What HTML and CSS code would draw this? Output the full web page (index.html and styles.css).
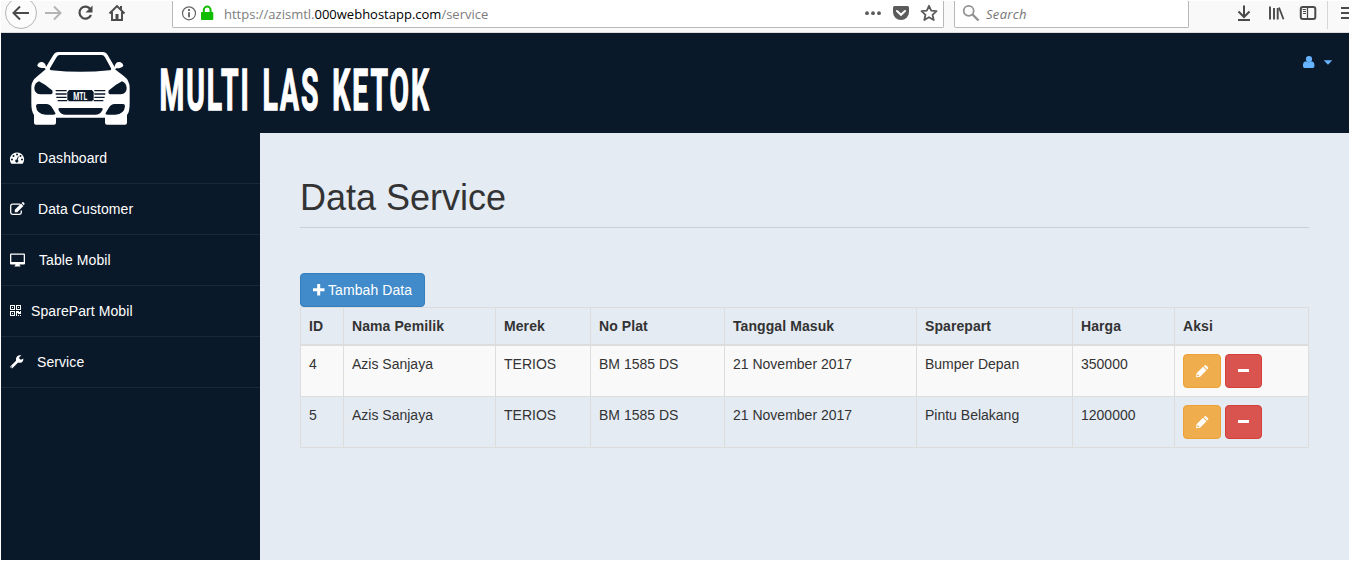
FILE: index.html
```html
<!DOCTYPE html>
<html lang="id">
<head>
<meta charset="utf-8">
<title>Data Service</title>
<link rel="stylesheet" href="styles.css">
</head>
<body>
<div class="window">
  <div class="toolbar">
    <svg class="nav-icons" width="171" height="31" viewBox="1 1 171 31" fill="none" stroke="#4a4a4a" stroke-width="2">
      <circle cx="21" cy="13" r="15.5" fill="#fcfcfc" stroke="#b5b5b5" stroke-width="1"/>
      <path d="M29 13H14M20 6.5 13.5 13 20 19.500"/>
      <path d="M45 13h15M54 6.500 60.500 13 54 19.500" stroke="#b4b4b4"/>
      <path d="M90.500 9.300A6 6 0 1 0 91 15" stroke-width="2.200"/>
      <path d="M92.500 5.500v7h-7z" fill="#4a4a4a" stroke="none"/>
      <path d="M109.500 13.500 117 6l7.500 7.500M112 12v8h10v-8" stroke-width="1.900"/>
      <path d="M115.500 14h3v6h-3z" fill="#4a4a4a" stroke="none"/>
      <path d="M120 6h2v4l-2-2z" fill="#4a4a4a" stroke="none"/>
    </svg>
    <div class="address">
      <svg width="46" height="26" viewBox="173 1 46 26" fill="none">
        <circle cx="189" cy="13.300" r="6.500" stroke="#666" stroke-width="1.200"/>
        <path d="M189 9v2M189 12.300v5" stroke="#555" stroke-width="1.700"/>
        <path d="M203.800 12.500V10a3.400 3.400 0 0 1 6.800 0v2.500" stroke="#12bc00" stroke-width="2"/>
        <rect x="201" y="12" width="12.300" height="8" rx="1" fill="#12bc00"/>
      </svg>
      <span class="url">https://azismtl.<b>000webhostapp.com</b>/service</span>
      <svg class="address-actions" width="80" height="26" viewBox="863 1 80 26" fill="#5b5b5b">
        <circle cx="867" cy="13.200" r="1.900"/><circle cx="873" cy="13.200" r="1.900"/><circle cx="879" cy="13.200" r="1.900"/>
        <path d="M894.500 6h13a1.500 1.500 0 0 1 1.500 1.500v4.500a8 8 0 0 1-16 0V7.500A1.500 1.500 0 0 1 894.500 6z"/>
        <path d="m897 11 4 3.800 4-3.800" fill="none" stroke="#fff" stroke-width="2" stroke-linecap="round"/>
        <path d="m929 5.800 2.200 4.900 5.300.5-4 3.600 1.200 5.200-4.700-2.800-4.700 2.800 1.200-5.200-4-3.600 5.300-.5z" fill="none" stroke="#5b5b5b" stroke-width="1.800" stroke-linejoin="round"/>
      </svg>
    </div>
    <div class="search">
      <svg width="30" height="26" viewBox="955 1 30 26" fill="none" stroke="#929292">
        <circle cx="968.700" cy="10.800" r="5" stroke-width="1.800"/><path d="m972.500 14.500 6 6" stroke-width="2.400"/>
      </svg>
      <span>Search</span>
    </div>
    <svg class="tool-icons" width="161" height="31" viewBox="1189 1 161 31" fill="none" stroke="#4a4a4a" stroke-width="2">
      <path d="M1244 5.500v11M1238.500 11.500l5.500 5.500 5.500-5.500M1238 20h12"/>
      <path d="M1270 6.500v13M1274 8v11.500M1277.700 8v11.500" stroke-width="1.900"/><path d="m1279 7.500 4.500 11.800" stroke-width="1.800"/>
      <rect x="1300.800" y="7" width="14.500" height="12" rx="2"/><path d="M1307.500 7v12" stroke-width="1.300"/><path d="M1302.500 9.500h3.500M1303 11.500h3M1303 13.500h3" stroke-width="1"/>
      <path d="M1327.500 1v28" stroke="#d6d6d6" stroke-width="1"/>
      <path d="M1341 8h9M1341 13h9M1341 18h9"/>
    </svg>
  </div>

  <header class="masthead">
    <svg class="car" width="101" height="75" viewBox="90 48 303 225">
      <path fill="#fff" d="M175 51H308Q318 51 323 60L344 96Q345 84 354 81Q367 79 370 92Q367 99 349 100L345 103L372 124Q389 136 389 160V205Q389 232 381 240V263Q381 269 375 269H321Q315 269 315 263V248H168V263Q168 269 162 269H108Q102 269 102 263V240Q94 230 94 205V155Q95 137 112 124L137 103L134 99Q115 99 112 92Q114 80 127 81Q137 84 138 96L160 60Q165 51 175 51Z"/>
      <g fill="#0a1929">
        <path d="M179 60H305Q311 60 315 67L333 100Q335 106 328 106Q242 115 155 106Q147 105 150 100L170 66Q173 60 179 60Z"/>
        <path d="M117 139Q139 150 156 166Q161 175 153 178H121Q102 176 103 158Q105 143 117 139Z"/>
        <path d="M366 139Q344 150 327 166Q322 175 330 178H362Q381 176 380 158Q378 143 366 139Z"/>
        <path d="M114 207H139Q150 207 157 219L166 234Q168 239 160 239H137Q110 238 108 214Q108 207 114 207Z"/>
        <path d="M369 207H344Q333 207 326 219L317 234Q315 239 323 239H346Q373 238 375 214Q375 207 369 207Z"/>
        <path d="M180 219H303Q312 219 306 227Q300 239 286 239H197Q183 239 177 227Q172 219 180 219Z"/>
        <path d="M207 165H276L281 172V193L276 199H207L202 193V172Z"/>
      </g>
      <path d="M167 167h33M167 177h33M169 187h31M173 197h29M283 167h33M283 177h33M283 187h31M281 197h29" stroke="#0a1929" stroke-width="4"/>
      <text class="plate" x="220" y="194" textLength="42" lengthAdjust="spacingAndGlyphs">MTL</text>
    </svg>
    <svg class="brand" width="290" height="80" viewBox="156 50 290 80">
      <text transform="translate(159.500 109.700) scale(.488 1)">MULTI LAS KETOK</text>
    </svg>
    <svg class="account" width="32" height="14" viewBox="1302 55 32 14" fill="#66b3ff">
      <path d="M1303 66.500q-.5-5 3-5.200 2.700 2 5.400 0 3.500.2 3 5.200-.1 1.400-1.500 1.400h-8.400q-1.400 0-1.500-1.400z"/><circle cx="1309" cy="59" r="3.100"/>
      <path d="M1323.700 60.300h8.600L1328 64.700z"/>
    </svg>
  </header>

  <div class="body">
    <nav class="sidebar">
      <a class="item"><svg width="28" height="16" viewBox="0 0 28 16"><path fill="#fff" fill-rule="evenodd" d="M7 2.500a7 7 0 0 1 6 10.700q-.3.600-1 .6H2q-.7 0-1-.6A7 7 0 0 1 7 2.500zM7 3.500a1 1 0 1 0 0 2 1 1 0 0 0 0-2zM3.500 5a1 1 0 1 0 0 2 1 1 0 0 0 0-2zM10.500 5a1 1 0 1 0 0 2 1 1 0 0 0 0-2zM2 8.500a1 1 0 1 0 0 2 1 1 0 0 0 0-2zM12 8.500a1 1 0 1 0 0 2 1 1 0 0 0 0-2zM8 6.300 6.700 9.600a1.500 1.500 0 1 0 1 .3l1-3.300z"/></svg>Dashboard</a>
      <a class="item"><svg width="28" height="16" viewBox="0 0 28 16" fill="none"><path d="M10 3.200H2.500Q.7 3.200.7 5v6.500q0 1.800 1.800 1.800h7q1.800 0 1.800-1.800V9.500" stroke="#fff" stroke-width="1.300"/><path fill="#fff" d="M4.800 8.800 11 2.600l2.400 2.400-6.200 6.200H4.800zM11.600 2l.8-.7q.5-.4 1 0l1 1q.5.500 0 1l-.6.900z"/></svg>Data Customer</a>
      <a class="item"><svg width="29" height="16" viewBox="0 0 29 16"><path fill="#fff" fill-rule="evenodd" d="M1 1.500h13q1 0 1 1v9q0 1-1 1H9.500q.2 1 1 1.500v.6H4.500V14q.8-.5 1-1.500H1q-1 0-1-1v-9q0-1 1-1zm.3 1.300v7.200h12.400V2.800z"/></svg>Table Mobil</a>
      <a class="item"><svg width="21" height="16" viewBox="0 0 21 16"><path fill="#fff" fill-rule="evenodd" d="M0 2h5v5H0zM1 3v3h3V3zM6 2h5v5H6zM7 3v3h3V3zM0 8h5v5H0zM1 9v3h3V9zM2 4h1v1H2zM8 4h1v1H8zM2 10h1v1H2zM6 8h3v1h1V8h1v3H8v-1H7v3H6zM8 12h1v1H8zM10 12h1v1h-1z"/></svg>SparePart Mobil</a>
      <a class="item"><svg width="27" height="16" viewBox="0 0 27 16"><path fill="#fff" fill-rule="evenodd" d="M.5 12.200 6 6.700Q5.500 2 9.500 1.300q1.200-.2 2 .3L9.300 3v1.800L11 5.700l2.300-1.300q.3 3.800-3.300 4.400-1 .2-1.900-.3l-5.500 5.500q-.8.600-1.500 0l-.6-.6q-.5-.6 0-1.200zm1.100.2a.6.600 0 1 0 .1 0z"/></svg>Service</a>
    </nav>
    <main class="content">
      <h1>Data Service</h1>
      <a class="btn primary"><svg width="12" height="12" viewBox="0 0 12 12"><path fill="#fff" d="M4.200 0h3v4.200h4.300v3H7.200v4.300h-3V7.200H0v-3h4.200z"/></svg>Tambah Data</a>
      <table>
        <colgroup><col class="c-id"><col class="c-name"><col class="c-brand"><col class="c-plate"><col class="c-date"><col class="c-part"><col class="c-price"><col></colgroup>
        <thead><tr><th>ID</th><th>Nama Pemilik</th><th>Merek</th><th>No Plat</th><th>Tanggal Masuk</th><th>Sparepart</th><th>Harga</th><th>Aksi</th></tr></thead>
        <tbody>
          <tr><td>4</td><td>Azis Sanjaya</td><td>TERIOS</td><td>BM 1585 DS</td><td>21 November 2017</td><td>Bumper Depan</td><td>350000</td><td><div class="actions">
            <a class="btn warning"><svg width="13" height="13" viewBox="0 0 13 13"><path fill="#fff" fill-rule="evenodd" d="m0 12.200.6-4L7 1.800l3.500 3.500-6.400 6.400zM7.800 1.200l.8-.8q.8-.7 1.600 0l1.700 1.700q.8.800 0 1.600l-.8.800zM1.500 9l-.3 1.700 1 .5 1.200-.5z"/></svg></a>
            <a class="btn danger"><svg width="12" height="12" viewBox="0 0 12 12"><path fill="#fff" d="M0 4h11v3H0z"/></svg></a></div></td></tr>
          <tr><td>5</td><td>Azis Sanjaya</td><td>TERIOS</td><td>BM 1585 DS</td><td>21 November 2017</td><td>Pintu Belakang</td><td>1200000</td><td><div class="actions">
            <a class="btn warning"><svg width="13" height="13" viewBox="0 0 13 13"><path fill="#fff" fill-rule="evenodd" d="m0 12.200.6-4L7 1.800l3.500 3.500-6.400 6.400zM7.800 1.200l.8-.8q.8-.7 1.600 0l1.700 1.700q.8.800 0 1.600l-.8.800zM1.500 9l-.3 1.700 1 .5 1.200-.5z"/></svg></a>
            <a class="btn danger"><svg width="12" height="12" viewBox="0 0 12 12"><path fill="#fff" d="M0 4h11v3H0z"/></svg></a></div></td></tr>
        </tbody>
      </table>
    </main>
  </div>
</div>
</body>
</html>
```
FILE: styles.css
```css
* { box-sizing: border-box; }
body { margin: 0; background: #fff; color: #333; font: 14px/20px "Liberation Sans", Arial, sans-serif; overflow: hidden; }
svg { display: block; flex: none; }
.window { width: 1348px; height: 560px; margin-left: 1px; padding-top: 1px; display: flex; flex-direction: column; overflow: hidden; }
.toolbar { height: 32px; flex: none; display: flex; align-items: flex-start; background: #f9f9f9; border-bottom: 1px solid #dcdcdc; font-family: "Open Sans", "Noto Sans", sans-serif; font-size: 13px; }
.address, .search { height: 27px; flex: none; display: flex; align-items: flex-start; background: #fff; border: 1px solid #b8b8b8; border-top: 0; border-radius: 0 0 2px 2px; line-height: 26px; white-space: nowrap; }
.address { width: 772px; }
.url { margin-left: 5px; color: #7d7d7d; }
.url b { font-weight: 400; color: #000; }
.address-actions { margin-left: auto; }
.search { width: 235px; margin-left: 10px; color: #757575; font-style: italic; }
.search span { margin-left: 1px; letter-spacing: .3px; }
.masthead { height: 100px; flex: none; display: flex; background: #0a1929; }
.car { margin: 18px 0 0 29px; }
.brand { margin: 17px 0 0 25px; }
.brand text { font: 700 58px Roboto, sans-serif; letter-spacing: 4px; word-spacing: 6px; fill: #fff; stroke: #fff; stroke-width: 1.4; }
.plate { font: 700 30px Roboto, sans-serif; fill: #fff; }
.account { margin: 22px 15px 0 auto; }
.body { flex: 1; display: flex; min-height: 0; }
.sidebar { width: 259px; flex: none; background: #0a1929; }
.item { height: 51px; padding-left: 9px; display: flex; align-items: center; border-bottom: 1px solid #1a2938; color: #fff; letter-spacing: .08px; }
.content { flex: 1; padding: 45px 40px 0; background: #e4ebf3; }
h1 { height: 50px; margin: 0 0 45px; border-bottom: 1px solid #c5ceda; font-size: 36px; font-weight: 400; line-height: 40px; }
.btn { display: flex; align-items: center; height: 34px; border: 1px solid; border-radius: 4px; color: #fff; }
.primary { width: 125px; padding-left: 12px; gap: 3px; background: #428bca; border-color: #357ebd; letter-spacing: .08px; }
.warning { width: 38px; justify-content: center; background: #f0ad4e; border-color: #eea236; }
.danger { width: 37px; justify-content: center; background: #d9534f; border-color: #d43f3a; }
table { width: 1009px; table-layout: fixed; border-collapse: collapse; }
th, td { padding: 8px; border: 1px solid #ddd; text-align: left; vertical-align: top; }
th { border-bottom-width: 2px; letter-spacing: .08px; }
tbody tr:first-child { background: #f9f9f9; }
.actions { display: flex; gap: 4px; }
.c-id { width: 43px; }
.c-name { width: 152px; }
.c-brand { width: 95px; }
.c-plate { width: 134px; }
.c-date { width: 192px; }
.c-part { width: 156px; }
.c-price { width: 102px; }
```
